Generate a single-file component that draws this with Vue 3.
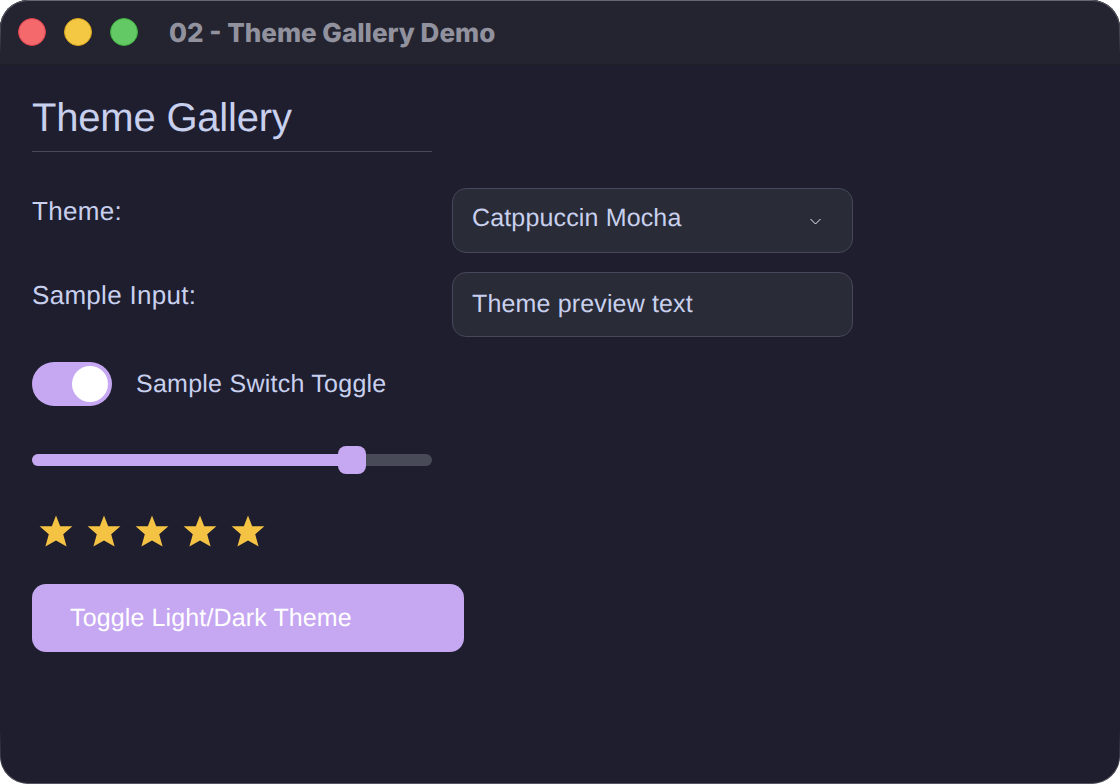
<script setup>
const stars = [1, 2, 3, 4, 5]
</script>

<template>
  <div class="window">
    <header class="titlebar">
      <div class="lights">
        <span class="light red"></span>
        <span class="light yellow"></span>
        <span class="light green"></span>
      </div>
      <span class="wintitle">02 - Theme Gallery Demo</span>
    </header>
    <main class="content">
      <div class="grid">
        <h1 class="heading">Theme Gallery</h1>
        <div class="empty"></div>
        <div class="label">Theme:</div>
        <div class="field select">
          <span class="seltext">Catppuccin Mocha</span>
          <svg class="chev" width="11" height="7" viewBox="0 0 11 7"><path d="M0.5 1 L5.5 6 L10.5 1" fill="none" stroke="#eef0fb" stroke-width="1"/></svg>
        </div>
        <div class="label second">Sample Input:</div>
        <div class="field input">Theme preview text</div>
      </div>
      <div class="switchrow">
        <div class="switch"><span class="knob"></span></div>
        <span class="switchlabel">Sample Switch Toggle</span>
      </div>
      <div class="slider">
        <div class="fill"></div>
        <div class="thumb"></div>
      </div>
      <div class="stars">
        <svg v-for="s in stars" :key="s" class="star" width="34" height="32" viewBox="0 0 34 32">
          <path d="M17 0.5 L21.2 11.2 L33.4 11.2 L24.2 19.2 L27.6 31.5 L17 25.4 L6.4 31.5 L9.8 19.2 L0.6 11.2 L12.8 11.2 Z" fill="#f5c344"/>
        </svg>
      </div>
      <button class="btn">Toggle Light/Dark Theme</button>
    </main>
  </div>
</template>

<style scoped>
.window {
  width: 1120px;
  height: 784px;
  border-radius: 28px;
  overflow: hidden;
  background: #1e1e2e;
  display: flex;
  flex-direction: column;
  box-sizing: border-box;
  font-family: "Liberation Sans", Arial, sans-serif;
  text-rendering: geometricPrecision;
  position: relative;
}
.window::after {
  content: "";
  position: absolute;
  inset: 0;
  padding: 1px;
  border-radius: 28px;
  pointer-events: none;
  background: linear-gradient(to bottom, rgba(255, 255, 255, 0.3), rgba(255, 255, 255, 0.3) 1%, rgba(255, 255, 255, 0) 7%, rgba(255, 255, 255, 0) 93%, rgba(255, 255, 255, 0.25));
  mask: linear-gradient(#000 0 0) content-box exclude, linear-gradient(#000 0 0);
}
.titlebar {
  height: 65px;
  flex: none;
  background: #232430;
  border-bottom: 1px solid #202128;
  box-sizing: border-box;
  display: flex;
  align-items: center;
  padding-left: 18px;
}
.lights {
  display: flex;
  gap: 18px;
}
.light {
  width: 28px;
  height: 28px;
  border-radius: 50%;
  box-sizing: border-box;
}
.red { background: #f4696b; border: 1px solid #d9404a; }
.yellow { background: #f5c843; border: 1px solid #d8a520; }
.green { background: #62c965; border: 1px solid #3fae3f; }
.wintitle {
  margin-left: 31px;
  margin-top: 2px;
  font-family: Inter, sans-serif;
  font-weight: 800;
  font-size: 26px;
  color: #92929f;
}
.content {
  flex: 1;
  padding: 0 32px;
}
.grid {
  display: grid;
  grid-template-columns: 400px 401px;
  column-gap: 20px;
  padding-top: 26px;
}
.heading {
  margin: 0;
  height: 61px;
  box-sizing: border-box;
  border-bottom: 1px solid #494a58;
  font-size: 40px;
  letter-spacing: -0.2px;
  line-height: 54px;
  font-weight: 400;
  color: #c8d0ee;
}
.label {
  margin-top: 36px;
  font-size: 26px;
  letter-spacing: 0.3px;
  line-height: 30px;
  padding-top: 8px;
  color: #c8d0ee;
}
.label.second {
  margin-top: 19px;
}
.field {
  box-sizing: border-box;
  height: 65px;
  margin-top: 36px;
  padding: 0 19px;
  display: flex;
  align-items: center;
  justify-content: space-between;
  background: #292b37;
  border: 1px solid #45475a;
  border-radius: 14px;
  font-size: 25px;
  letter-spacing: 0.15px;
  color: #c8d0ee;
}
.input {
  margin-top: 19px;
}
.seltext {
  margin-top: -4px;
}
.chev {
  margin-right: 12px;
  margin-top: 2px;
}
.switchrow {
  display: flex;
  align-items: center;
  margin-top: 25px;
  height: 44px;
}
.switch {
  width: 80px;
  height: 44px;
  border-radius: 22px;
  background: #c6a7f1;
  position: relative;
}
.knob {
  position: absolute;
  top: 4px;
  right: 4px;
  width: 36px;
  height: 36px;
  border-radius: 50%;
  background: #fff;
}
.switchlabel {
  margin-left: 24px;
  font-size: 25px;
  letter-spacing: 0.25px;
  color: #c8d0ee;
}
.slider {
  position: relative;
  width: 400px;
  height: 12px;
  margin-top: 48px;
  border-radius: 6px;
  background: #484a58;
}
.fill {
  width: 320px;
  height: 100%;
  border-radius: 6px;
  background: #c6a7f1;
}
.thumb {
  position: absolute;
  left: 306px;
  top: -8px;
  width: 28px;
  height: 28px;
  border-radius: 8px;
  background: #c6a7f1;
}
.stars {
  display: flex;
  gap: 14px;
  margin-top: 49px;
  padding-left: 7px;
}
.star {
  display: block;
}
.btn {
  display: block;
  width: 432px;
  height: 68px;
  margin-top: 37px;
  padding: 0 0 0 38px;
  text-align: left;
  border: 0;
  border-radius: 14px;
  background: #c6a7f1;
  color: #fff;
  font-family: "Liberation Sans", Arial, sans-serif;
  font-size: 25px;
  letter-spacing: 0.13px;
  text-rendering: geometricPrecision;
}
</style>

<style>
html, body { margin: 0; background: #fff; }
</style>
